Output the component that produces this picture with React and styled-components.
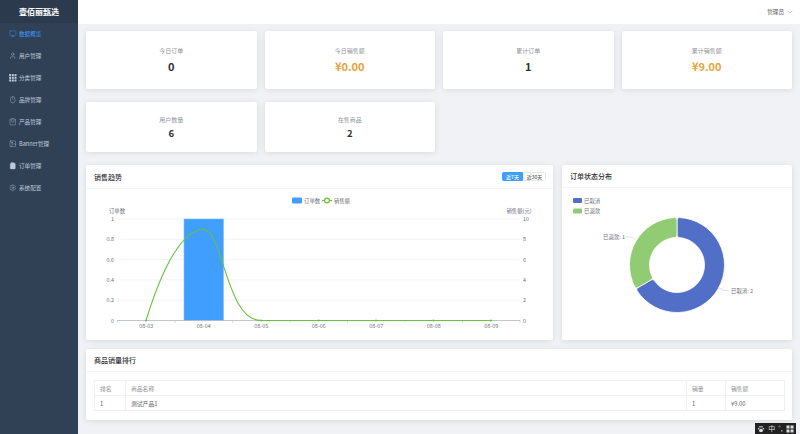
import React from 'react';
import styled, { createGlobalStyle } from 'styled-components';
import { Monitor, User, Mouse, ShoppingBag, Image, ClipboardList, Settings, ChevronDown } from 'lucide-react';

const GlobalStyle = createGlobalStyle`
    html, body {
        margin: 0;
        padding: 0;
        height: 434px;
        overflow: hidden;
        background: #f0f2f5;
        font-family: "Noto Sans CJK SC", "Noto Sans", sans-serif;
    }
    * { box-sizing: border-box; }
`;

const Layout = styled.div`
    display: flex;
    width: 800px;
    height: 434px;
`;

const Sidebar = styled.aside`
    width: 78px;
    flex: none;
    background: #304156;
`;

const Logo = styled.div`
    height: 23px;
    background: #2b3a4d;
    color: #fff;
    font-size: 8px;
    font-weight: 700;
    display: flex;
    align-items: center;
    justify-content: center;
`;

const Nav = styled.nav`
    display: flex;
    flex-direction: column;
`;

const NavItem = styled.div`
    height: 22px;
    display: flex;
    align-items: center;
    gap: 2.5px;
    padding-left: 9px;
    font-size: 5.6px;
    color: ${p => (p.$active ? '#409eff' : '#bfcbd9')};
`;

const Main = styled.div`
    flex: 1;
    min-width: 0;
    display: flex;
    flex-direction: column;
`;

const Header = styled.header`
    height: 24px;
    background: #fff;
    display: flex;
    align-items: center;
    justify-content: flex-end;
    gap: 2px;
    padding-right: 6px;
    font-size: 5.6px;
    color: #606266;
`;

const Content = styled.main`
    padding: 7px 8px 0;
    display: flex;
    flex-direction: column;
`;

const StatGrid = styled.section`
    display: grid;
    grid-template-columns: repeat(4, 170.5px);
    column-gap: 8px;
    margin-bottom: 13px;
`;

const StatCard = styled.div`
    height: ${p => (p.$tall ? '58px' : '50px')};
    background: #fff;
    border-radius: 2px;
    box-shadow: 0 1px 6px rgba(0, 0, 0, 0.1);
    display: flex;
    flex-direction: column;
    align-items: center;
    justify-content: center;
    gap: ${p => (p.$tall ? '3px' : '2px')};
`;

const StatLabel = styled.div`
    font-size: 6px;
    line-height: 9px;
    color: #909399;
`;

const StatValue = styled.div`
    font-size: ${p => (p.$tall ? '11px' : '9.5px')};
    line-height: ${p => (p.$tall ? '16px' : '14px')};
    font-weight: 700;
    color: ${p => (p.$money ? '#e6a23c' : '#303133')};
`;

const ChartRow = styled.section`
    display: grid;
    grid-template-columns: 467px 230px;
    column-gap: 9px;
    margin-bottom: 9px;
`;

const Panel = styled.div`
    background: #fff;
    border-radius: 2px;
    box-shadow: 0 1px 6px rgba(0, 0, 0, 0.1);
`;

const PanelHead = styled.div`
    height: ${p => (p.$short ? '23px' : '24px')};
    padding: 0 7px 0 8px;
    border-bottom: 1px solid #f3f4f6;
    display: flex;
    align-items: center;
    justify-content: space-between;
    font-size: 7px;
    font-weight: 500;
    color: #303133;
`;

const Toggle = styled.div`
    display: flex;
`;

const ToggleButton = styled.div`
    height: 9.5px;
    width: ${p => (p.$active ? '21px' : '23px')};
    display: flex;
    align-items: center;
    justify-content: center;
    font-size: 5px;
    border: 0.5px solid ${p => (p.$active ? '#409eff' : '#e4e7ed')};
    border-radius: ${p => (p.$active ? '1.5px 0 0 1.5px' : '0 1.5px 1.5px 0')};
    background: ${p => (p.$active ? '#409eff' : '#fff')};
    color: ${p => (p.$active ? '#fff' : '#606266')};
`;

const ChartSvg = styled.svg`
    display: block;
    font-family: "Noto Sans CJK SC", "Noto Sans", sans-serif;
    font-size: 5.4px;
    fill: #6e7079;
`;

const TableWrap = styled.div`
    padding: 8px 8px 9px;
`;

const Table = styled.table`
    width: 690px;
    border-collapse: collapse;
    table-layout: fixed;
    font-size: 5.8px;
    color: #606266;

    th, td {
        height: 15px;
        padding: 0 5px;
        border: 0.5px solid #eef0f4;
        text-align: left;
        font-weight: 400;
    }

    th { color: #909399; }
`;

const ImeBar = styled.div`
    position: fixed;
    left: 755px;
    top: 423px;
    width: 41px;
    height: 11px;
    background: #222;
    color: #ddd;
    font-size: 7px;
    line-height: 1;
    display: flex;
    align-items: center;
    justify-content: space-around;
    padding: 0 1px;
`;

// filled 3x3 block, the outline icon from the package reads too thin here
const GridIcon = ({ size }) => (
    <svg width={size} height={size} viewBox="0 0 12 12" fill="currentColor">
        {[0, 4.3, 8.6].map(y =>
            [0, 4.3, 8.6].map(x => <rect key={`${x}-${y}`} x={x + 0.2} y={y + 0.2} width="3.2" height="3.2" />)
        )}
    </svg>
);

const OrderIcon = ({ size }) => <ClipboardList size={size} strokeWidth={1.2} fill="currentColor" stroke="currentColor" />;

const menu = [
    { label: '数据概览', icon: Monitor, active: true },
    { label: '用户管理', icon: User },
    { label: '分类管理', icon: GridIcon },
    { label: '品牌管理', icon: Mouse },
    { label: '产品管理', icon: ShoppingBag },
    { label: 'Banner管理', icon: Image },
    { label: '订单管理', icon: OrderIcon },
    { label: '系统配置', icon: Settings },
];

const stats = [
    { label: '今日订单', value: '0', tall: true },
    { label: '今日销售额', value: '¥0.00', tall: true, money: true },
    { label: '累计订单', value: '1', tall: true },
    { label: '累计销售额', value: '¥9.00', tall: true, money: true },
    { label: '用户数量', value: '6' },
    { label: '在售商品', value: '2' },
];

const DAYS = ['08-03', '08-04', '08-05', '08-06', '08-07', '08-08', '08-09'];
const LEFT_TICKS = ['0', '0.2', '0.4', '0.6', '0.8', '1'];
const RIGHT_TICKS = ['0', '2', '4', '6', '8', '10'];
const X0 = 117.5;
const STEP = 57.5;
const BASE = 320.5;
const ROW = 20.3;

const TrendChart = () => (
    <ChartSvg width="467" height="151" viewBox="86 189 467 151">
        <rect x="292" y="197.5" width="10" height="6" rx="1" fill="#409eff" />
        <text x="304" y="202.5">订单数</text>
        <line x1="322" x2="332" y1="200.5" y2="200.5" stroke="#67c23a" strokeWidth="1.2" />
        <circle cx="327" cy="200.5" r="2.4" fill="#fff" stroke="#67c23a" strokeWidth="1.2" />
        <text x="334" y="202.5">销售额</text>

        <text x="117" y="212.5" textAnchor="middle">订单数</text>
        <text x="519" y="212.5" textAnchor="middle">销售额(元)</text>

        {LEFT_TICKS.map((t, i) => {
            const y = BASE - i * ROW;
            return (
                <g key={t}>
                    {i > 0 && <line x1={X0} x2="520" y1={y} y2={y} stroke="#eff0f5" strokeWidth="0.8" />}
                    <text x="114" y={y + 2} textAnchor="end">{t}</text>
                    <text x="523" y={y + 2}>{RIGHT_TICKS[i]}</text>
                </g>
            );
        })}

        <rect x="184" y="219" width="39.5" height="101.5" fill="#409eff" stroke="#7dbcff" strokeWidth="0.6" />

        <line x1={X0} x2="520" y1={BASE} y2={BASE} stroke="#b4b7c3" strokeWidth="0.8" />
        {[...DAYS, ''].map((d, i) => (
            <line key={i} x1={X0 + i * STEP} x2={X0 + i * STEP} y1={BASE} y2={BASE + 2} stroke="#b4b7c3" strokeWidth="0.6" />
        ))}
        {DAYS.map((d, i) => (
            <text key={d} x={X0 + (i + 0.5) * STEP} y="327.5" textAnchor="middle">{d}</text>
        ))}

        <path
            d="M146 320.5 C164 262 184 229.5 203.5 229.5 C223 229.5 226 320.5 261 320.5 L491 320.5"
            fill="none"
            stroke="#67c23a"
            strokeWidth="1.1"
        />
        {DAYS.map((d, i) => (
            <circle key={d} cx={146 + i * STEP} cy={i === 1 ? 229.5 : BASE} r="1.1" fill="#67c23a" />
        ))}
    </ChartSvg>
);

// ring sector with rounded corners, angles clockwise from 12 o'clock
const polar = (r, deg) => {
    const a = ((deg - 90) * Math.PI) / 180;
    return `${(677 + r * Math.cos(a)).toFixed(2)} ${(265 + r * Math.sin(a)).toFixed(2)}`;
};

const sector = (from, to, outer = 47.5, inner = 27.5, c = 2.5) => {
    const dOut = (c / outer) * (180 / Math.PI);
    const dIn = (c / inner) * (180 / Math.PI);
    const large = to - from > 180 ? 1 : 0;
    return [
        `M${polar(outer, from + dOut)}`,
        `A${outer} ${outer} 0 ${large} 1 ${polar(outer, to - dOut)}`,
        `Q${polar(outer, to)} ${polar(outer - c, to)}`,
        `L${polar(inner + c, to)}`,
        `Q${polar(inner, to)} ${polar(inner, to - dIn)}`,
        `A${inner} ${inner} 0 ${large} 0 ${polar(inner, from + dIn)}`,
        `Q${polar(inner, from)} ${polar(inner + c, from)}`,
        `L${polar(outer - c, from)}`,
        `Q${polar(outer, from)} ${polar(outer, from + dOut)}`,
        'Z',
    ].join(' ');
};

const StatusChart = () => (
    <ChartSvg width="230" height="152" viewBox="562 188 230 152">
        <rect x="573" y="198" width="9" height="5" rx="1" fill="#516fc6" />
        <text x="584" y="202.5">已取消</text>
        <rect x="573" y="208.5" width="9" height="5" rx="1" fill="#91cc75" />
        <text x="584" y="213">已退款</text>

        <path d={sector(0, 240)} fill="#516fc6" stroke="#fff" strokeWidth="0.8" />
        <path d={sector(240, 360)} fill="#91cc75" stroke="#fff" strokeWidth="0.8" />

        <path d="M719 288 Q723 291 729 291" fill="none" stroke="#b5c2ea" strokeWidth="0.6" />
        <text x="731" y="293">已取消: 2</text>
        <path d="M625 237 L630 237 Q633 237 635 240" fill="none" stroke="#c5e4b5" strokeWidth="0.6" />
        <text x="603" y="239">已退款: 1</text>
    </ChartSvg>
);

const App = () => (
    <Layout>
        <GlobalStyle />
        <Sidebar>
            <Logo>壹佰丽甄选</Logo>
            <Nav>
                {menu.map(({ label, icon: Icon, active }) => (
                    <NavItem key={label} $active={active}>
                        <Icon size={7.5} strokeWidth={1.2} />
                        {label}
                    </NavItem>
                ))}
            </Nav>
        </Sidebar>
        <Main>
            <Header>
                管理员
                <ChevronDown size={8} strokeWidth={1} />
            </Header>
            <Content>
                <StatGrid>
                    {stats.slice(0, 4).map(s => (
                        <StatCard key={s.label} $tall>
                            <StatLabel>{s.label}</StatLabel>
                            <StatValue $tall $money={s.money}>{s.value}</StatValue>
                        </StatCard>
                    ))}
                </StatGrid>
                <StatGrid>
                    {stats.slice(4).map(s => (
                        <StatCard key={s.label}>
                            <StatLabel>{s.label}</StatLabel>
                            <StatValue>{s.value}</StatValue>
                        </StatCard>
                    ))}
                </StatGrid>
                <ChartRow>
                    <Panel>
                        <PanelHead>
                            销售趋势
                            <Toggle>
                                <ToggleButton $active>近7天</ToggleButton>
                                <ToggleButton>近30天</ToggleButton>
                            </Toggle>
                        </PanelHead>
                        <TrendChart />
                    </Panel>
                    <Panel>
                        <PanelHead $short>订单状态分布</PanelHead>
                        <StatusChart />
                    </Panel>
                </ChartRow>
                <Panel>
                    <PanelHead $short>商品销量排行</PanelHead>
                    <TableWrap>
                        <Table>
                            <colgroup>
                                <col width="31" />
                                <col width="561" />
                                <col width="39" />
                                <col width="59" />
                            </colgroup>
                            <thead>
                                <tr>
                                    <th>排名</th>
                                    <th>商品名称</th>
                                    <th>销量</th>
                                    <th>销售额</th>
                                </tr>
                            </thead>
                            <tbody>
                                <tr>
                                    <td>1</td>
                                    <td>测试产品1</td>
                                    <td>1</td>
                                    <td>¥9.00</td>
                                </tr>
                            </tbody>
                        </Table>
                    </TableWrap>
                </Panel>
            </Content>
        </Main>
        <ImeBar>
            <svg width="8" height="8" viewBox="0 0 16 16" fill="currentColor">
                <ellipse cx="8" cy="11" rx="4" ry="3.5" />
                <circle cx="3" cy="7.5" r="1.6" />
                <circle cx="6" cy="3.5" r="1.7" />
                <circle cx="10" cy="3.5" r="1.7" />
                <circle cx="13" cy="7.5" r="1.6" />
            </svg>
            <span>中</span>
            <span>°,</span>
            <svg width="8" height="8" viewBox="0 0 16 16" fill="currentColor">
                <rect x="1" y="1" width="6" height="6" />
                <rect x="9" y="1" width="6" height="6" />
                <rect x="1" y="9" width="6" height="6" />
                <rect x="9" y="9" width="6" height="6" />
            </svg>
        </ImeBar>
    </Layout>
);

export default App;
